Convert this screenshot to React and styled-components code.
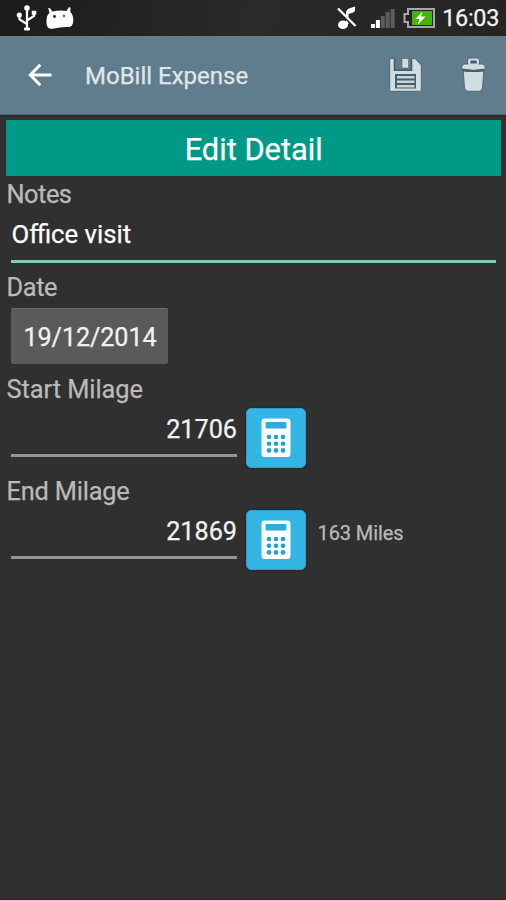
import React from "react";
import styled, { createGlobalStyle } from "styled-components";

const GlobalStyle = createGlobalStyle`
  * { box-sizing: border-box; }
  body { margin: 0; background: #303030; }
`;

const Screen = styled.div`
  width: 506px;
  height: 900px;
  display: flex;
  flex-direction: column;
  overflow: hidden;
  background: #303030;
  border-bottom: 1px solid #2b2529;
  font-family: Roboto, "Noto Sans", sans-serif;
  color: #f4f4f4;
  svg { display: block; flex: none; }
`;

const StatusBar = styled.header`
  height: 36px;
  flex: none;
  display: flex;
  align-items: center;
  justify-content: space-between;
  padding: 0 7px 0 15px;
  background: linear-gradient(100deg, #1c1c1c, #2a2a2a 50%, #242424);
`;

const StatusGroup = styled.div`
  display: flex;
  align-items: center;
  gap: ${(p) => p.$gap}px;
`;

const SignalSlot = styled.div`
  padding-left: 7px;
`;

const Label = styled.span`
  display: block;
  white-space: nowrap;
  font-size: ${(p) => p.$size}px;
  line-height: ${(p) => p.$line}px;
  letter-spacing: ${(p) => p.$track || 0}px;
  color: ${(p) => p.$color || "#f2f2f2"};
  -webkit-text-stroke: 0.25px currentColor;
`;

const AppBar = styled.nav`
  height: 79px;
  flex: none;
  display: flex;
  align-items: center;
  padding: 0 20px 0 28px;
  background: #607d8d;
  border-top: 1px solid #66808c;
  border-bottom: 1px solid #53666f;
`;

const IconButton = styled.button`
  border: 0;
  padding: 0 0 ${(p) => p.$lift || 0}px;
  background: none;
  display: block;
  margin-left: ${(p) => p.$left || 0}px;
`;

const AppTitle = styled.h1`
  margin: 0 auto 0 33px;
  font-weight: 400;
`;

const Form = styled.main`
  display: flex;
  flex-direction: column;
  padding: 4px 5px 0 6px;
  border-top: 1px solid #2b2729;
`;

const Banner = styled.h2`
  margin: 0;
  height: 56px;
  width: 495.4px;
  display: flex;
  justify-content: center;
  padding-top: 11px;
  background: #009887;
  font-weight: 400;
`;

const Field = styled.section`
  height: ${(p) => p.$height}px;
  padding-top: ${(p) => p.$top || 0}px;
`;

const NotesLine = styled.div`
  width: 485px;
  height: 51px;
  margin: 3px 0 0 5px;
  padding: 4px 0 0 0.5px;
  border-bottom: 3px solid #80cbc0;
`;

const DateButton = styled.button`
  display: flex;
  align-items: center;
  justify-content: center;
  width: 157px;
  height: 56px;
  margin: 6px 0 0 5px;
  padding: 3px 0 0 1px;
  border: 0;
  border-top: 1px solid #6b6b6b;
  border-radius: 2px;
  background: #5a5a5a;
  font-family: inherit;
`;

const MilageRow = styled.div`
  display: flex;
  align-items: flex-start;
  margin: 4px 0 0 5px;
`;

const MilageValue = styled.div`
  width: 226px;
  height: 49px;
  padding-top: 7px;
  display: flex;
  justify-content: flex-end;
  border-bottom: 3px solid #969696;
`;

const CalcButton = styled.button`
  width: 60px;
  height: 60px;
  margin-left: 9px;
  padding: 0;
  display: flex;
  align-items: center;
  justify-content: center;
  border: 1px solid #2a9ed0;
  border-radius: 5px;
  background: #33b5e5;
  box-shadow: 0 0 2px #2a1c13;
`;

const Distance = styled.div`
  padding: 11px 0 0 11.5px;
`;

const UsbIcon = () => (
  <svg width="23" height="28" viewBox="0 0 23 28" fill="none" stroke="#fff" strokeWidth="2.2">
    <path d="M12 6V25M12 20L4.5 15.5V10M12 16.5L19 12V9" />
    <circle cx="12" cy="4" r="2.8" fill="#fff" stroke="none" />
    <circle cx="4.3" cy="11" r="2.6" fill="#fff" stroke="none" />
    <path d="M17.5 7.5H20.5V10H17.5Z" fill="#fff" strokeWidth="1.5" />
    <path d="M9.5 24H14.5V26H9.5Z" fill="#fff" strokeWidth="1" />
  </svg>
);

const DroidIcon = () => (
  <svg width="28" height="23" viewBox="0 -1 28 23">
    <path d="M2.2 0L4 .2L6.5 3.5Q14 2 20.5 3L23 -1L24.5 -.3L24.3 4Q27.5 7 27.3 13Q27 18.5 23 19Q15 18.5 8 20.5Q2 22 .8 17Q-.5 8 3.5 5Z" fill="#fff" />
    <circle cx="8.5" cy="8.5" r="1.4" fill="#222" />
    <circle cx="18" cy="8" r="1.4" fill="#777" />
  </svg>
);

const MuteIcon = () => (
  <svg width="20" height="24" viewBox="0 0 20 24">
    <ellipse cx="6" cy="18.8" rx="5" ry="4.3" fill="#fff" />
    <path d="M9 18V7Q9 4 12 2.5L18 .5V4Q18 6 15.5 6.8L11.5 8V18Z" fill="#fff" />
    <path d="M1 4L18 21" stroke="#222" strokeWidth="3" />
    <path d="M1 2.5L18.5 20" stroke="#fff" strokeWidth="2.3" />
  </svg>
);

const signalBars = [4, 8, 12, 16, 19];
const SignalIcon = () => (
  <svg width="24" height="20" viewBox="0 0 24 20">
    {signalBars.map((h, i) => (
      <rect key={h} x={i * 4.9} y={20 - h} width="4" height={h} fill={i < 2 ? "#fff" : "#5c5c5c"} />
    ))}
  </svg>
);

const BatteryIcon = () => (
  <svg width="32" height="20" viewBox="0 0 32 20">
    <path d="M5 1H31V19H5V14H1.5V6H5Z" fill="#222" stroke="#a8a8a8" strokeWidth="2" />
    <rect x="9" y="3" width="20" height="14" fill="#42b50a" />
    <path d="M19.5 3.5L12.5 11H16.5L14.5 17L22.5 8.5H18Z" fill="#fff" />
  </svg>
);

const BackIcon = () => (
  <svg width="24" height="24" viewBox="0 0 24 24" fill="none" stroke="#fff" strokeWidth="3">
    <path d="M23.5 12H3M12.3 1.7L2.3 12L12.3 22.3" />
  </svg>
);

const SaveIcon = () => (
  <svg width="33" height="35" viewBox="0 0 33 35">
    <path d="M.7 1.5H5.5V13H22.5V1.5H26L32.3 8V34.3H.7Z" fill="#d2dde1" stroke="#526773" strokeWidth="1" />
    <path d="M5.5 2V13.3H22.5V2" fill="none" stroke="#465f6c" strokeWidth="1.6" />
    <rect x="13" y="1.5" width="6.5" height="9.5" fill="#d2dde1" stroke="#526773" strokeWidth=".6" />
    <rect x="6" y="17" width="21" height="14.5" fill="#465f6c" />
    <path d="M8 20.3H25.5M8 24.8H25.5M8 29.2H25.5" stroke="#c8d5da" strokeWidth="2.4" />
  </svg>
);

const TrashIcon = () => (
  <svg width="25" height="35" viewBox="0 0 25 35">
    <path d="M2.2 14H22.8L21.5 31Q21 34 18 34.3H7Q4 34 3.5 31Z" fill="#d2dde1" stroke="#526773" />
    <path d="M6.5 7V3Q7 1 9 1H16Q18 1 18.5 3V7Z" fill="#d2dde1" stroke="#526773" />
    <path d="M3 7H22Q24.5 8 24.5 12Q12.5 14.5 .5 12Q.5 8 3 7Z" fill="#d2dde1" stroke="#526773" />
    <rect x="7.5" y="6" width="10" height="2.5" fill="#d2dde1" />
    <rect x="9.3" y="3.5" width="6.4" height="3" fill="#465f6c" />
    <path d="M1.5 13Q12.5 15.3 23.5 13" fill="none" stroke="#465f6c" strokeWidth="1.8" />
  </svg>
);

const CalcIcon = () => (
  <svg width="30" height="40" viewBox="0 0 30 40">
    <rect x=".5" y=".5" width="29" height="38.5" rx="3" fill="#fafcff" />
    <rect x="4.7" y="4" width="20.6" height="6.5" fill="#2faadb" />
    {[19, 25.7, 32.4].map((y) =>
      [8, 15, 22].map((x) => <circle key={`${x}-${y}`} cx={x} cy={y} r="2.3" fill="#249fd1" />)
    )}
  </svg>
);

const LabelSlot = styled.div`
  padding-left: 0.5px;
`;

const FieldLabel = ({ children, track = -0.2 }) => (
  <LabelSlot><Label $size={25.4} $line={30} $track={track} $color="#bababa">{children}</Label></LabelSlot>
);

const MilageField = ({ label, value, distance, track }) => (
  <Field $height={102} $top={10}>
    <FieldLabel track={track}>{label}</FieldLabel>
    <MilageRow>
      <MilageValue><Label $size={25.2} $line={30}>{value}</Label></MilageValue>
      <CalcButton aria-label={`Calculate ${label}`}><CalcIcon /></CalcButton>
      {distance && <Distance><Label $size={20} $line={24} $track={-0.1} $color="#bababa">{distance}</Label></Distance>}
    </MilageRow>
  </Field>
);

export default function App() {
  return (
    <Screen>
      <GlobalStyle />
      <StatusBar>
        <StatusGroup $gap={8}><UsbIcon /><DroidIcon /></StatusGroup>
        <StatusGroup $gap={7.5}>
          <MuteIcon />
          <SignalSlot><SignalIcon /></SignalSlot>
          <BatteryIcon />
          <Label $size={23.4} $line={37} $track={-0.3}>16:03</Label>
        </StatusGroup>
      </StatusBar>
      <AppBar>
        <IconButton aria-label="Back" $lift={2}><BackIcon /></IconButton>
        <AppTitle><Label $size={24} $line={30} $color="#e0e6ea">MoBill Expense</Label></AppTitle>
        <IconButton aria-label="Save" $lift={3}><SaveIcon /></IconButton>
        <IconButton aria-label="Delete" $left={39} $lift={3}><TrashIcon /></IconButton>
      </AppBar>
      <Form>
        <Banner><Label $size={30.8} $line={38} $color="#ffffff">Edit Detail</Label></Banner>
        <Field $height={92} $top={3}>
          <FieldLabel track={-0.5}>Notes</FieldLabel>
          <NotesLine><Label $size={25.7} $line={36} $color="#ffffff">Office visit</Label></NotesLine>
        </Field>
        <Field $height={96} $top={4}>
          <FieldLabel track={-0.4}>Date</FieldLabel>
          <DateButton><Label $size={25.2} $line={30} $track={-0.1}>19/12/2014</Label></DateButton>
        </Field>
        <MilageField label="Start Milage" value="21706" track={-0.05} />
        <MilageField label="End Milage" value="21869" distance="163 Miles" />
      </Form>
    </Screen>
  );
}
